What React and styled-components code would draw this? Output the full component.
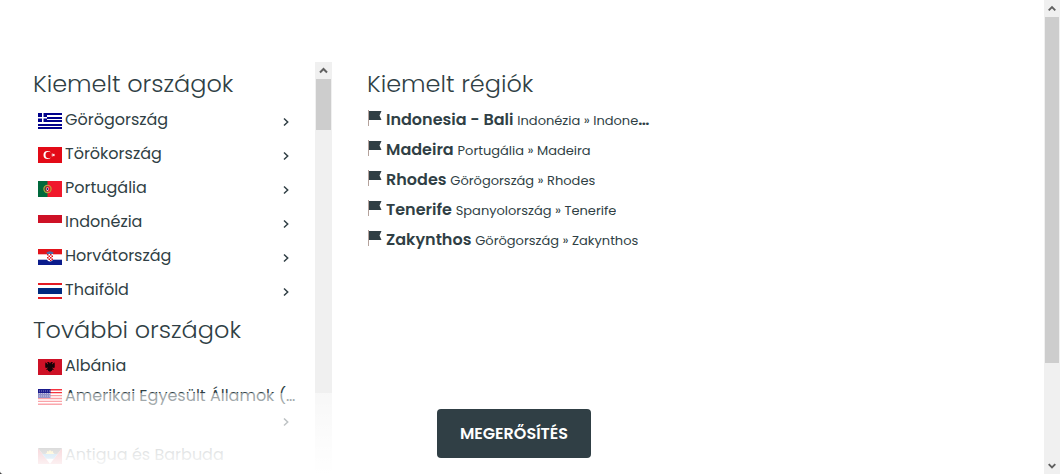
import React from "react";
import styled, { createGlobalStyle } from "styled-components";

const featured = [
  { code: "gr", name: "Görögország" },
  { code: "tr", name: "Törökország" },
  { code: "pt", name: "Portugália" },
  { code: "id", name: "Indonézia" },
  { code: "hr", name: "Horvátország" },
  { code: "th", name: "Thaiföld" },
];

const others = [
  { code: "al", name: "Albánia", leaf: true },
  { code: "us", name: "Amerikai Egyesült Államok (USA)", long: true },
  { code: "ag", name: "Antigua és Barbuda", leaf: true },
];

const regions = [
  { name: "Indonesia - Bali", path: "Indonézia » Indonesia - Bali" },
  { name: "Madeira", path: "Portugália » Madeira" },
  { name: "Rhodes", path: "Görögország » Rhodes" },
  { name: "Tenerife", path: "Spanyolország » Tenerife" },
  { name: "Zakynthos", path: "Görögország » Zakynthos" },
];

const flags = {
  gr: (
    <>
      <rect width="24" height="16" fill="#fff" />
      <path d="M0 0h24v2H0zM9 4h15v2H9zM9 7h15v2H9zM0 11h24v2H0zM0 14h24v2H0zM0 0h9v9H0z" fill="#00008b" />
      <path d="M4 0h1.5v9H4zM0 4h9v1.5H0z" fill="#fff" />
    </>
  ),
  tr: (
    <>
      <rect width="24" height="16" fill="#e30a17" />
      <circle cx="9.5" cy="8" r="4" fill="#fff" />
      <circle cx="10.7" cy="8" r="3.2" fill="#e30a17" />
      <path d="M13 8l1.6-.5V5.9l1 1.3 1.5-.5-.9 1.3.9 1.3-1.5-.5-1 1.3V8.5z" fill="#fff" />
    </>
  ),
  pt: (
    <>
      <rect width="24" height="16" fill="#f0182c" />
      <rect width="9.5" height="16" fill="#00693c" />
      <circle cx="9.5" cy="8" r="3.6" fill="none" stroke="#b8a83c" strokeWidth="1.2" />
      <path d="M8 6h3v3a1.5 1.5 0 0 1-3 0z" fill="#e8e0e8" stroke="#e0182c" />
      <path d="M9 7h1v2H9z" fill="#0a3c8c" />
    </>
  ),
  id: (
    <>
      <rect width="24" height="16" fill="#fff" />
      <rect width="24" height="8" fill="#ce1126" />
    </>
  ),
  hr: (
    <>
      <rect width="24" height="16" fill="#fff" />
      <rect width="24" height="5.3" fill="#e2131b" />
      <rect y="10.7" width="24" height="5.3" fill="#0b1c8c" />
      <path d="M9 5h6v4.5a3 3 0 0 1-6 0z" fill="#fff" />
      <path d="M9 5h1.5v1.5H9zM12 5h1.5v1.5H12zM10.5 6.5H12V8h-1.5zM13.5 6.5H15V8h-1.5zM9 8h1.5v1.5H9zM12 8h1.5v1.5H12zM10.5 9.5H12V11h-1.5zM13.5 9.5H15V11h-1.5zM12 11h1.5v1H12z" fill="#e2131b" />
      <path d="M8.5 3.5l1.5-.8 2-.4 2 .4 1.5.8-.5 1.5H9z" fill="#4b6ca8" />
    </>
  ),
  th: (
    <>
      <rect width="24" height="16" fill="#fff" />
      <path d="M0 0h24v2H0zM0 14h24v2H0z" fill="#e31b23" />
      <rect y="5" width="24" height="6" fill="#002a7f" />
    </>
  ),
  al: (
    <>
      <rect width="24" height="16" fill="#ce1126" />
      <path
        d="M12 4.5L11 3H9l1 1.500v1L8.500 4 7 3.500 7.500 5l-.5 1 .5 1-.5 1 1 1 2-.5L8 11l2-.2v1.400l1-.4 1 1.700 1-1.700 1 .4v-1.400l2 .2-2-2.500 2 .5 1-1-.5-1 .5-1-.5-1 .5-1.500-1.500.5L14 5.500v-1L15 3h-2z"
        fill="#160307"
      />
    </>
  ),
  us: (
    <>
      <rect width="24" height="16" fill="#fff" />
      <path d="M0 .7h24M0 3.7h24M0 6.6h24M0 9.5h24M0 12.4h24M0 15.3h24" stroke="#f5333f" strokeWidth="1.4" />
      <rect width="12.5" height="9" fill="#1a1a8c" />
      <path d="M1 2h11M1 4.5h11M1 7h11" stroke="#8c8cc8" strokeDasharray="1 1" />
    </>
  ),
  ag: (
    <>
      <rect width="24" height="16" fill="#ce1126" />
      <path d="M0 0h24L12 16z" fill="#fff" />
      <path d="M0 0h24l-4.5 6h-15z" fill="#222" />
      <path d="M4.5 6h15L16 10.7H8z" fill="#0072c6" />
      <path d="M7.5 6L9 4.5 9 3l1.5.4L12 2l1.5 1.4L15 3v1.5L16.5 6z" fill="#fcd116" />
    </>
  ),
};

const CountryRow = ({ country }) => (
  <li>
    <CountryLink href="#" $long={country.long}>
      <FlagIcon viewBox="0 0 24 16" aria-hidden="true">
        {flags[country.code]}
      </FlagIcon>
      <CountryName>{country.name}</CountryName>
      {!country.leaf && !country.long && <Chevron />}
      {country.long && (
        <NextLine>
          <Chevron />
        </NextLine>
      )}
    </CountryLink>
  </li>
);

const Chevron = () => (
  <ChevronIcon viewBox="0 0 6 10" aria-hidden="true">
    <path d="M1 1.5L4.7 5 1 8.5" />
  </ChevronIcon>
);

const ScrollBar = ({ width, thumb, down }) => (
  <Track $width={width} aria-hidden="true">
    <Arrow viewBox="0 0 17 17">
      <path d="M5 10.5l3.500-3.500 3.500 3.500" />
    </Arrow>
    <Thumb $size={thumb} />
    <Rest />
    {down && (
      <Arrow viewBox="0 0 17 17">
        <path d="M5 7l3.500 3.500L12 7" />
      </Arrow>
    )}
  </Track>
);

const App = () => {
  return (
    <Page>
      <GlobalStyle />
      <Dialog>
        <Columns>
          <CountryPanel>
            <Countries>
              <Title>Kiemelt országok</Title>
              <List $gap="4px">
                {featured.map((c) => (
                  <CountryRow key={c.code} country={c} />
                ))}
              </List>
              <Title>További országok</Title>
              <List>
                {others.map((c) => (
                  <CountryRow key={c.code} country={c} />
                ))}
              </List>
            </Countries>
            <ScrollBar width="17px" thumb="51px" />
          </CountryPanel>
          <Regions>
            <Title>Kiemelt régiók</Title>
            <List>
              {regions.map((r) => (
                <li key={r.name}>
                  <RegionLink href="#">
                    <RegionIcon viewBox="0 0 15 16" aria-hidden="true">
                      <path d="M0 0h1v16H0z" fill="#b5a39d" />
                      <path d="M1 1h12.5l-2 4.5 2 4.5H1z" fill="#303f45" />
                    </RegionIcon>
                    <RegionName>
                      {r.name} <RegionPath>{r.path}</RegionPath>
                    </RegionName>
                  </RegionLink>
                </li>
              ))}
            </List>
          </Regions>
        </Columns>
        <Footer>
          <Confirm type="button">MEGERŐSÍTÉS</Confirm>
        </Footer>
      </Dialog>
      <ScrollBar width="16px" thumb="346px" down />
    </Page>
  );
};

const GlobalStyle = createGlobalStyle`
  * {
    box-sizing: border-box;
  }
  body {
    margin: 0;
    background: #444;
    color: #303f45;
    font-family: Poppins, Inter, "Open Sans", sans-serif;
    font-size: 16px;
  }
`;

const Page = styled.div`
  display: flex;
  height: 100vh;
  overflow: hidden;
`;

const Dialog = styled.main`
  position: relative;
  display: flex;
  flex: 1;
  min-width: 0;
  padding: 62px 9px 0 33px;
  background: #fff;
  border-bottom-left-radius: 4px;
  overflow: hidden;
`;

const Columns = styled.div`
  display: grid;
  flex: 1;
  min-width: 0;
  grid-template-columns: repeat(3, minmax(0, 1fr));
`;

const CountryPanel = styled.section`
  display: flex;
  min-height: 0;
  margin-right: 35px;
`;

const Countries = styled.div`
  flex: 1;
  min-width: 0;
  padding-right: 18px;
  overflow: hidden;
`;

const Regions = styled.section`
  padding-right: 50px;
`;

const Title = styled.h3`
  margin: 0 0 1px;
  padding-top: 2px;
  font-size: 24px;
  font-weight: 300;
  line-height: 40px;
  white-space: nowrap;
`;

const List = styled.ul`
  display: grid;
  grid-template-columns: minmax(0, 1fr);
  gap: ${(p) => p.$gap || "0"};
  margin: 0 0 3px;
  padding: 0;
  list-style: none;
`;

const CountryLink = styled.a`
  display: flex;
  flex-wrap: ${(p) => (p.$long ? "wrap" : "nowrap")};
  align-items: center;
  column-gap: 3px;
  padding-left: 5px;
  margin-bottom: ${(p) => (p.$long ? "11px" : "0")};
  color: inherit;
  line-height: 30px;
  text-decoration: none;
`;

const FlagIcon = styled.svg`
  flex: none;
  width: 24px;
  height: 16px;
  margin-top: 2px;
`;

const CountryName = styled.span`
  flex: 1;
  min-width: 0;
  overflow: hidden;
  text-overflow: ellipsis;
  white-space: nowrap;
`;

const NextLine = styled.span`
  display: flex;
  align-items: center;
  justify-content: flex-end;
  width: 100%;
  height: 18px;
`;

const ChevronIcon = styled.svg`
  flex: none;
  width: 6px;
  height: 10px;
  margin: 4px 8px 0 0;
  fill: none;
  stroke: #303f45;
  stroke-width: 1.5;
`;

const RegionLink = styled.a`
  display: flex;
  align-items: center;
  gap: 3px;
  color: inherit;
  font-weight: 600;
  line-height: 30px;
  text-decoration: none;
`;

const RegionIcon = styled.svg`
  flex: none;
  width: 15px;
  height: 16px;
  margin: 0 0 4px 1px;
`;

const RegionName = styled.span`
  min-width: 0;
  overflow: hidden;
  text-overflow: ellipsis;
  white-space: nowrap;
`;

const RegionPath = styled.span`
  font-size: 13px;
  font-weight: 400;
  line-height: 1;
`;

const Footer = styled.footer`
  position: absolute;
  right: 16px;
  bottom: 0;
  left: 0;
  display: flex;
  justify-content: center;
  padding: 16px;
  background: linear-gradient(rgba(255, 255, 255, 0.5), #fff);
`;

const Confirm = styled.button`
  padding: 0 23px;
  border: 0;
  border-radius: 4px;
  background: #303f45;
  color: #fff;
  font: inherit;
  font-weight: 600;
  line-height: 49px;
  cursor: pointer;
`;

const Track = styled.div`
  display: flex;
  flex: none;
  flex-direction: column;
  width: ${(p) => p.$width};
  background: #f0f0f0;
`;

const Arrow = styled.svg`
  flex: none;
  width: 100%;
  height: 17px;
  fill: none;
  stroke: #606060;
  stroke-width: 2;
`;

const Thumb = styled.div`
  flex: none;
  height: ${(p) => p.$size};
  margin: 0 1px;
  background: #cdcdcd;
`;

const Rest = styled.div`
  flex: 1;
`;

export default App;
